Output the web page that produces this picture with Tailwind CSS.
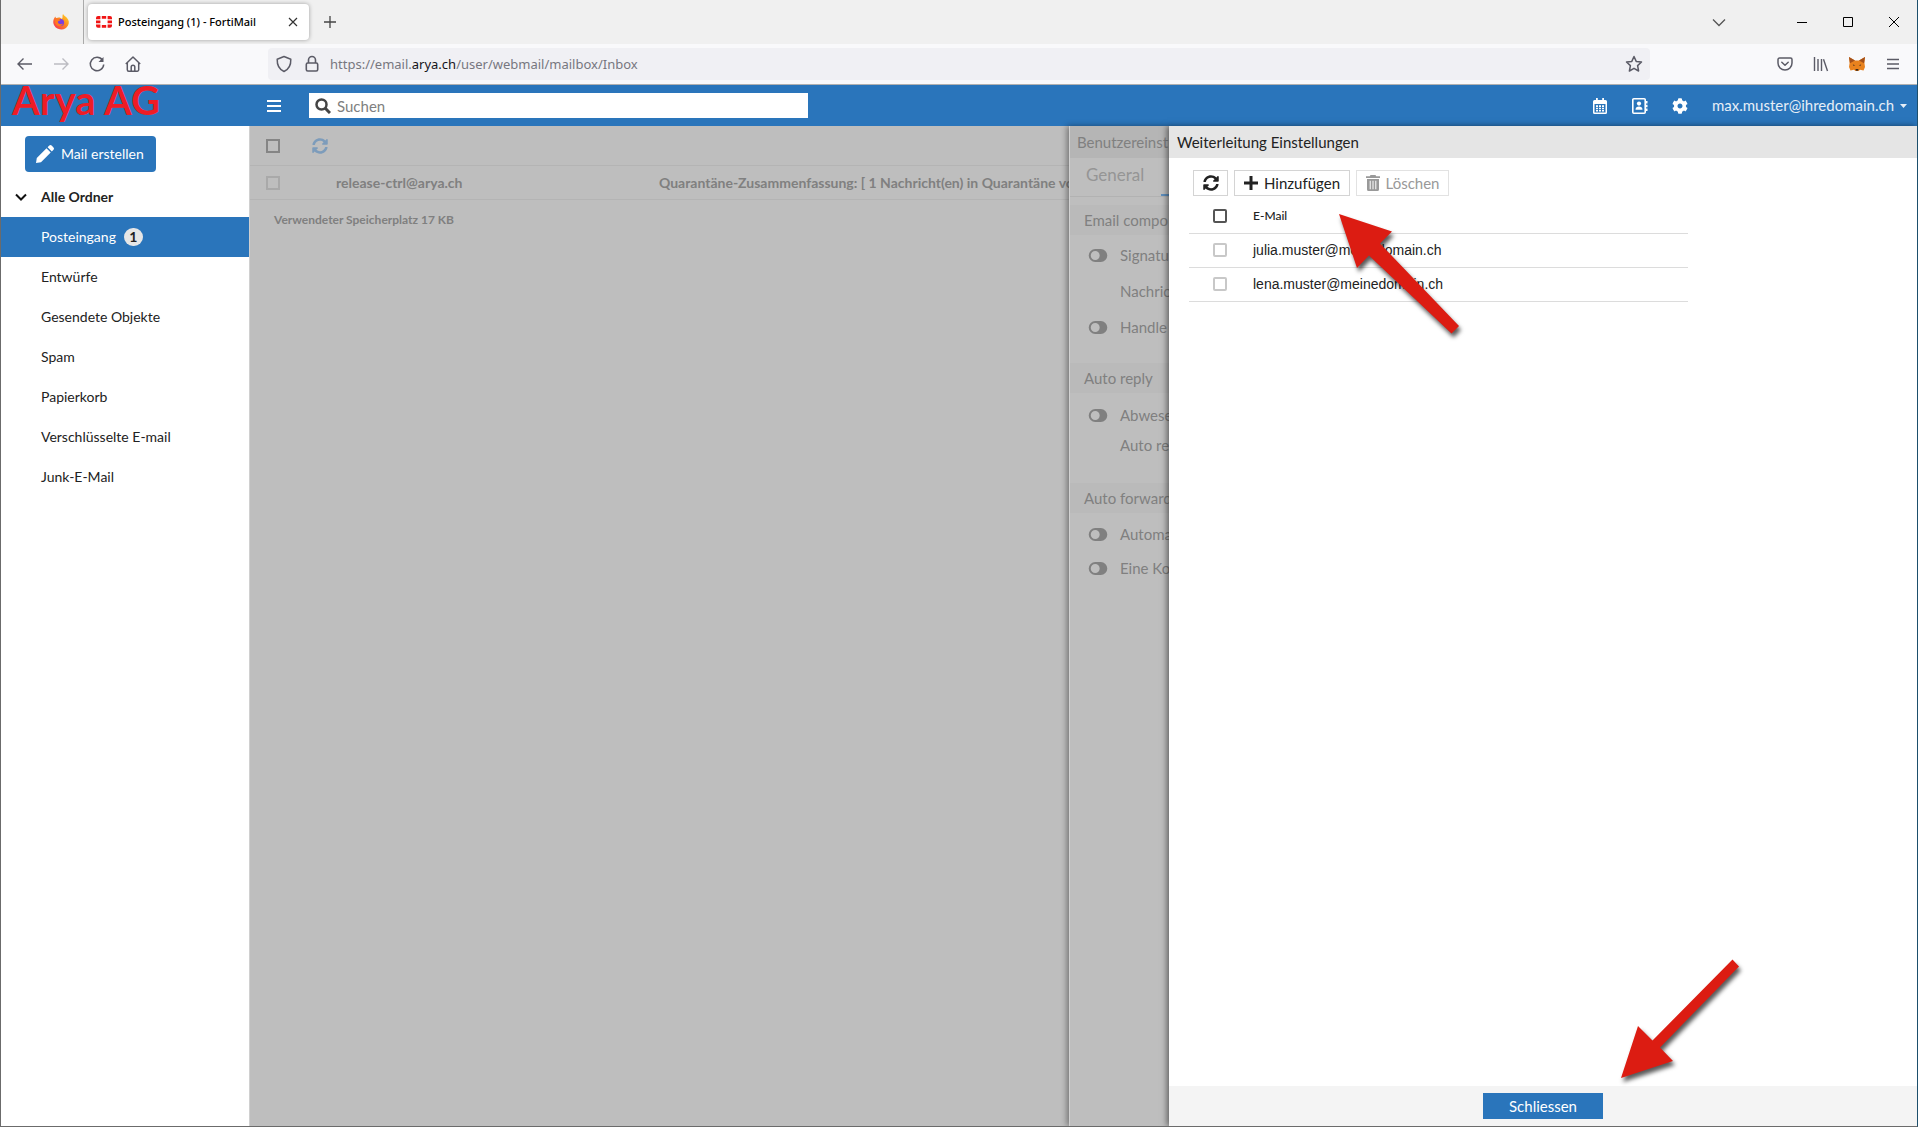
<!DOCTYPE html>
<html lang="de">
<head>
<meta charset="utf-8">
<title>Posteingang (1) - FortiMail</title>
<script src="https://cdn.jsdelivr.net/npm/@tailwindcss/browser@4"></script>
</head>
<body class="flex h-screen flex-col overflow-hidden border-r border-b border-l border-r-[#1d4f6c] border-b-[#6b6b6b] border-l-[#6b6b6b] bg-white font-[Lato,sans-serif] text-[#222]">

<!-- shared icon shapes -->
<svg class="hidden">
  <symbol id="sync" viewBox="0 0 512 512"><path fill="currentColor" d="M370.72 133.28C339.458 104.008 298.888 87.962 255.848 88c-77.458.068-144.328 53.178-162.791 126.85-1.344 5.363-6.122 9.15-11.651 9.15H24.103c-7.498 0-13.194-6.807-11.807-14.176C33.933 94.924 134.813 8 256 8c66.448 0 126.791 26.136 171.315 68.685L463.03 40.97C478.149 25.851 504 36.559 504 57.941V192c0 13.255-10.745 24-24 24H345.941c-21.382 0-32.09-25.851-16.971-40.971l41.75-41.749zM32 296h134.059c21.382 0 32.09 25.851 16.971 40.971l-41.75 41.75c31.262 29.273 71.835 45.319 114.876 45.28 77.418-.07 144.315-53.144 162.787-126.849 1.344-5.363 6.122-9.15 11.651-9.15h57.304c7.498 0 13.194 6.807 11.807 14.176C478.067 417.076 377.187 504 256 504c-66.448 0-126.791-26.136-171.315-68.685L48.97 471.03C33.851 486.149 8 475.441 8 454.059V320c0-13.255 10.745-24 24-24z"/></symbol>
  <symbol id="toggle" viewBox="0 0 20 14"><path fill="currentColor" fill-rule="evenodd" d="M7 0h6a7 7 0 0 1 0 14H7A7 7 0 0 1 7 0zm0 2.200a4.800 4.800 0 1 0 0 9.600a4.800 4.800 0 1 0 0-9.600z"/></symbol>
</svg>

<!-- tab strip -->
<div class="flex h-11 shrink-0 items-center bg-[#f0f0f0] pr-3 font-['Noto_Sans','Open_Sans',sans-serif]">
  <button aria-label="Firefox" class="flex h-11 w-[83px] items-center justify-end border-r border-[#aaa] pr-3">
    <svg class="size-5" viewBox="0 0 20 20"><defs><linearGradient id="ff" x1="1" y1="0" x2="0" y2="1"><stop offset="0" stop-color="#ffe226"/><stop offset=".45" stop-color="#ff8a1f"/><stop offset="1" stop-color="#f3265c"/></linearGradient></defs><path fill="url(#ff)" d="M12 2c1 2 3 2.500 4 4 2 2 2.500 5 1 7.500A8 8 0 0 1 2.300 11C2 8 3 6 4.500 4.500c0 1 .5 1.500 1 1.500C7.500 5 10 5.500 11 7c1-1.500 0-3.500 1-5z"/><circle cx="9.500" cy="10.500" r="3.600" fill="#7a3fe0"/><path fill="#ff7a1f" d="M4.500 7.500c2-1 4-.5 5 .8-1 .7-3 .5-2.500 2.200.5 2 3.500 2 5 1-1 2.500-4 3.500-6 2s-2.500-4-1.500-6z"/></svg>
  </button>
  <div class="ml-1 flex h-9 w-[221px] items-center rounded bg-white pr-2 pl-2 shadow-[0_0_4px_rgba(0,0,0,0.35)]">
    <svg class="h-4 w-4 shrink-0" viewBox="0 0 16 16"><path fill="#f01414" d="M5.800 2h4.400v2.800H5.800zM5.800 11h4.400v2.800H5.800zM0 6.600h4.400v2.600H0zM11.600 6.600H16v2.600h-4.400zM0 5.200V4a2 2 0 0 1 2-2h2.400v3.200zM16 5.200V4a2 2 0 0 0-2-2h-2.400v3.200zM0 10.600h4.400v3.200H2a2 2 0 0 1-2-2zM16 10.600h-4.400v3.200H14a2 2 0 0 0 2-2z"/></svg>
    <span class="ml-1.5 flex-1 text-[11px] font-medium whitespace-nowrap text-black">Posteingang (1) - FortiMail</span>
    <button aria-label="Tab schliessen" class="flex size-4 items-center justify-center"><svg class="size-2.5" viewBox="0 0 10 10" fill="none" stroke="#333" stroke-width="1.200"><path d="M1 1l8 8M9 1L1 9"/></svg></button>
  </div>
  <button aria-label="Neuer Tab" class="ml-[15px]"><svg class="size-3" viewBox="0 0 12 12" fill="none" stroke="#444" stroke-width="1.300"><path d="M6 0v12M0 6h12"/></svg></button>
  <div class="ml-auto flex items-center">
    <button aria-label="Alle Tabs" class="mr-[54px] flex w-[46px] justify-center"><svg class="size-3.5" viewBox="0 0 14 14" fill="none" stroke="#555" stroke-width="1.300"><path d="M1 4.500l6 6 6-6"/></svg></button>
    <button aria-label="Minimieren" class="flex w-[46px] justify-start"><svg class="size-3" viewBox="0 0 12 12" fill="none" stroke="#000"><path d="M1 6.500h10"/></svg></button>
    <button aria-label="Maximieren" class="flex w-[46px] justify-start"><svg class="size-3" viewBox="0 0 12 12" fill="none" stroke="#000"><path d="M1.500 1.500h9v9h-9z"/></svg></button>
    <button aria-label="Schliessen" class="mr-[5px] flex w-3 justify-start"><svg class="size-3" viewBox="0 0 12 12" fill="none" stroke="#000"><path d="M1 1l10 10M11 1L1 11"/></svg></button>
  </div>
</div>

<!-- address row -->
<div class="flex h-[41px] shrink-0 items-center gap-4 border-b border-[#b0b0b0] bg-[#f9f9fb] px-3.5 text-[#5b5b66]">
  <button aria-label="Zurück"><svg class="size-5" viewBox="0 0 20 20" fill="none" stroke="currentColor" stroke-width="1.400"><path d="M17 10H3M8.500 4.500L3 10l5.500 5.500"/></svg></button>
  <button aria-label="Vor" class="text-[#bcbcc2]"><svg class="size-5" viewBox="0 0 20 20" fill="none" stroke="currentColor" stroke-width="1.400"><path d="M3 10h14M11.500 4.500L17 10l-5.500 5.500"/></svg></button>
  <button aria-label="Neu laden"><svg class="size-5" viewBox="0 0 20 20" fill="none" stroke="currentColor" stroke-width="1.500"><path d="M15.500 6.200A6.700 6.700 0 1 0 16.700 10.500"/><path d="M16.500 3v5h-5z" fill="currentColor" stroke="none"/></svg></button>
  <button aria-label="Startseite"><svg class="size-5" viewBox="0 0 20 20" fill="none" stroke="currentColor" stroke-width="1.500" stroke-linejoin="round"><path d="M2.800 10L10 3l7.200 7"/><path d="M4.300 9v6.700a1.500 1.500 0 0 0 1.500 1.500h8.400a1.500 1.500 0 0 0 1.500-1.500V9"/><path d="M8.200 17v-4a1.800 1.800 0 0 1 3.600 0v4"/></svg></button>
  <div class="mx-[109px] flex h-8 flex-1 items-center rounded bg-[#f0f0f4] px-1.5">
    <svg class="size-5" viewBox="0 0 20 20" fill="none" stroke="currentColor" stroke-width="1.500" stroke-linejoin="round"><path d="M10 2.500l6.800 2.700c.2 5.500-1.800 10-6.800 12.300C5 15.200 3 10.700 3.200 5.200z"/></svg>
    <svg class="ml-2 size-5" viewBox="0 0 20 20" fill="none" stroke="currentColor" stroke-width="1.600"><rect x="4.300" y="9" width="11.400" height="8" rx="1.500"/><path d="M6.500 9V6a3.500 3.500 0 0 1 7 0v3"/></svg>
    <a href="#" class="ml-2 flex-1 pt-0.5 font-['Noto_Sans','Open_Sans',sans-serif] text-[13px] text-[#77777f]">https://email.<span class="text-[#15141a]">arya.ch</span>/user/webmail/mailbox/Inbox</a>
    <svg class="size-5" viewBox="0 0 20 20" fill="none" stroke="currentColor" stroke-width="1.500" stroke-linejoin="round"><path d="M10 2.500l2.200 4.900 5.300.6-3.900 3.600 1 5.400-4.600-2.700L5.400 17l1-5.400L2.500 8l5.300-.6z"/></svg>
  </div>
  <button aria-label="Pocket"><svg class="size-5" viewBox="0 0 20 20" fill="none" stroke="currentColor" stroke-width="1.500" stroke-linecap="round" stroke-linejoin="round"><path d="M4.500 4h11a1.500 1.500 0 0 1 1.500 1.500V9a7 7 0 0 1-14 0V5.500A1.500 1.500 0 0 1 4.500 4z"/><path d="M6.800 8.300L10 11.300l3.200-3"/></svg></button>
  <button aria-label="Bibliothek"><svg class="size-5" viewBox="0 0 20 20" fill="none" stroke="currentColor" stroke-width="1.400"><path d="M3.500 3v14M7 5v12M10.500 5v12M12.500 5.200L16.500 17"/></svg></button>
  <button aria-label="MetaMask"><svg class="size-5" viewBox="0 0 20 20"><path fill="#e8821e" d="M2 3l6 3.500h4L18 3l-.6 6 .6 4-1.500 3.500-3.500-.8L11.500 17h-3L7 15.700l-3.500.8L2 13l.6-4z"/><path fill="#a3501a" d="M2 3l6 3.500-5 2.800zM18 3l-6 3.500 5 2.800z"/><path fill="#3a2a20" d="M5.800 10.500l2.400.8-1.800.5zM14.200 10.500l-2.400.8 1.800.5zM8.500 15h3l-.4 1.800H8.900z"/></svg></button>
  <button aria-label="Menü"><svg class="size-5" viewBox="0 0 20 20" fill="none" stroke="currentColor" stroke-width="1.500"><path d="M4 5.500h12M4 10h12M4 14.500h12"/></svg></button>
</div>

<!-- application header -->
<header class="flex h-[41px] shrink-0 items-center bg-[#2a75bb] text-white">
  <div class="w-[265px] pb-3 pl-[11px] text-[40px] leading-8 font-bold text-[#ee1c25]">Arya AG</div>
  <button aria-label="Menü"><svg class="h-4 w-4" viewBox="0 0 16 16" fill="none" stroke="currentColor" stroke-width="2"><path d="M1 3h14M1 8h14M1 13h14"/></svg></button>
  <label class="ml-[27px] flex h-[25px] w-[499px] items-center bg-white px-1.5">
    <svg class="size-4 text-[#444]" viewBox="0 0 16 16" fill="none" stroke="currentColor" stroke-width="2.500"><circle cx="6.500" cy="6.500" r="5"/><path d="M10 10l5 5" stroke-width="3"/></svg>
    <input type="text" aria-label="Suchen" placeholder="Suchen" class="ml-1.5 flex-1 text-[15px] leading-5 text-[#444] outline-none placeholder:text-[#808080]">
  </label>
  <div class="ml-auto flex items-center pr-2.5">
    <button aria-label="Kalender" class="mr-6"><svg class="size-4" viewBox="0 0 16 16"><path fill="currentColor" fill-rule="evenodd" d="M4 0h1.800v2h4.400V0H12v2h1.500A1.500 1.500 0 0 1 15 3.500v11a1.500 1.500 0 0 1-1.500 1.500h-11A1.500 1.500 0 0 1 1 14.500v-11A1.500 1.500 0 0 1 2.500 2H4zM2.500 6v8.500h11V6z"/><path fill="currentColor" d="M4 7.300h2v1.700H4zM7 7.300h2v1.700H7zM10 7.300h2v1.700h-2zM4 9.700h2v1.500H4zM7 9.700h2v1.500H7zM10 9.700h2v1.500h-2zM4 12h2v1.500H4zM7 12h2v1.500H7zM10 12h2v1.500h-2z"/></svg></button>
    <button aria-label="Adressbuch" class="mr-6"><svg class="size-4" viewBox="0 0 16 16"><path fill="none" stroke="currentColor" stroke-width="1.600" d="M1.800.8h10.400a1 1 0 0 1 1 1v12.400a1 1 0 0 1-1 1H1.800a1 1 0 0 1-1-1V1.800a1 1 0 0 1 1-1z"/><circle cx="7" cy="5.600" r="2.100" fill="currentColor"/><path fill="currentColor" d="M3.500 11.800c0-2.300 1.500-3.300 3.500-3.300s3.500 1 3.500 3.300zM14 3h1.500v2.500H14zM14 6.800h1.500v2.500H14zM14 10.600h1.500v2.500H14z"/></svg></button>
    <button aria-label="Einstellungen" class="mr-6"><svg class="size-4" viewBox="0 0 512 512"><path fill="currentColor" d="M487.400 315.700l-42.600-24.600c4.300-23.200 4.300-47 0-70.200l42.600-24.600c4.900-2.800 7.100-8.600 5.500-14-11.100-35.600-30-67.800-54.700-94.600-3.800-4.100-10-5.100-14.800-2.300L380.800 110c-17.900-15.400-38.500-27.300-60.800-35.100V25.800c0-5.600-3.900-10.500-9.400-11.700-36.700-8.200-74.300-7.800-109.200 0-5.500 1.200-9.400 6.100-9.400 11.700V75c-22.200 7.900-42.800 19.800-60.800 35.100L88.700 85.500c-4.900-2.800-11-1.900-14.800 2.300-24.700 26.700-43.600 58.900-54.700 94.600-1.700 5.400.6 11.200 5.500 14L67.300 221c-4.300 23.200-4.300 47 0 70.200l-42.600 24.600c-4.900 2.800-7.100 8.600-5.500 14 11.100 35.600 30 67.800 54.700 94.600 3.800 4.100 10 5.100 14.800 2.300l42.600-24.600c17.900 15.400 38.500 27.300 60.800 35.100v49.200c0 5.600 3.900 10.500 9.400 11.700 36.700 8.200 74.300 7.800 109.200 0 5.500-1.200 9.400-6.100 9.400-11.700v-49.200c22.200-7.900 42.800-19.800 60.800-35.100l42.600 24.600c4.900 2.800 11 1.900 14.800-2.300 24.700-26.700 43.600-58.900 54.700-94.600 1.500-5.500-.7-11.300-5.600-14.100zM256 336c-44.100 0-80-35.900-80-80s35.900-80 80-80 80 35.900 80 80-35.900 80-80 80z"/></svg></button>
    <button class="flex items-center gap-1.5 text-[15px] text-[#e6eef7]">max.muster@ihredomain.ch<svg class="h-1 w-[7px]" viewBox="0 0 7 4"><path fill="currentColor" d="M0 0h7L3.500 4z"/></svg></button>
  </div>
</header>

<main class="flex min-h-0 flex-1">
  <!-- folders -->
  <nav class="w-[249px] shrink-0 border-r border-[#d0d0d0] pt-2.5 text-sm">
    <button class="mb-[5px] ml-6 flex h-9 w-[131px] items-center rounded bg-[#2a75bb] pl-2.5 whitespace-nowrap text-white"><svg class="mr-1.5 size-5" viewBox="0 0 20 20" fill="currentColor"><path d="M1 19l.8-5L11.500 4.300l4.200 4.200L6 18.200zM12.600 3.200l1.700-1.700a1.600 1.600 0 0 1 2.300 0l1.900 1.900a1.600 1.600 0 0 1 0 2.300l-1.700 1.700z"/></svg>Mail erstellen</button>
    <button class="flex h-10 w-full items-center font-bold"><svg class="mr-3.5 ml-3.5 size-3" viewBox="0 0 12 12" fill="none" stroke="#111" stroke-width="2"><path d="M1 3.500l5 5 5-5"/></svg>Alle Ordner</button>
    <a href="#" class="flex h-10 items-center bg-[#2a75bb] pl-10 text-white">Posteingang<span class="ml-2 flex h-[18px] w-[19px] items-center justify-center rounded-full bg-[#e6e6e6] font-bold text-[#222]">1</span></a>
    <a href="#" class="flex h-10 items-center pl-10">Entwürfe</a>
    <a href="#" class="flex h-10 items-center pl-10">Gesendete Objekte</a>
    <a href="#" class="flex h-10 items-center pl-10">Spam</a>
    <a href="#" class="flex h-10 items-center pl-10">Papierkorb</a>
    <a href="#" class="flex h-10 items-center pl-10">Verschlüsselte E-mail</a>
    <a href="#" class="flex h-10 items-center pl-10">Junk-E-Mail</a>
  </nav>

  <!-- message list -->
  <section class="min-w-0 flex-1 overflow-hidden bg-[#bebebe] text-sm font-bold text-[#808080]">
    <div class="flex h-10 items-center gap-8 border-b border-[#b4b4b4] pl-4">
      <input type="checkbox" aria-label="Alle auswählen" class="size-3.5 appearance-none border-2 border-[#858585]">
      <button aria-label="Aktualisieren" class="text-[#7d9cbb]"><svg class="size-4"><use href="#sync"/></svg></button>
    </div>
    <div class="flex h-[34px] items-center border-b border-[#b4b4b4] pl-4 whitespace-nowrap">
      <input type="checkbox" aria-label="Nachricht auswählen" class="mr-14 size-3.5 shrink-0 appearance-none border-2 border-[#a9a9a9]">
      <span class="w-[323px] shrink-0">release-ctrl@arya.ch</span>
      <span>Quarantäne-Zusammenfassung: [ 1 Nachricht(en) in Quarantäne vo</span>
    </div>
    <p class="py-3 pl-6 text-xs">Verwendeter Speicherplatz 17 KB</p>
  </section>

  <!-- user settings, dimmed behind the drawer -->
  <aside class="z-10 w-[100px] shrink-0 overflow-hidden border-l border-[#d2d2d2] bg-[#bebebe] text-[15px] whitespace-nowrap text-[#808080] shadow-[-2px_0_6px_rgba(0,0,0,0.4)]">
    <h2 class="flex h-8 items-center bg-[#b5b5b5] pl-[7px]">Benutzereinst</h2>
    <div class="flex h-[39px] items-stretch border-b border-[#b2b2b2] pl-4 text-[#959595]"><button class="w-[75px] shrink-0 pb-1 text-left text-[17px]">General</button><button class="w-20 shrink-0 border-b-2 border-[#5f8fbd]" aria-label="Mail"></button></div>
    <h3 class="mt-2 flex h-[30px] items-center bg-[#bababa] pl-3.5">Email compo</h3>
    <div class="flex h-10 items-center pl-[18px]"><button aria-label="Signatur" class="mr-3 shrink-0"><svg class="h-[13px] w-5"><use href="#toggle"/></svg></button>Signatu</div>
    <div class="flex h-8 items-center pl-[50px]">Nachric</div>
    <div class="flex h-10 items-center pl-[18px]"><button aria-label="Handle" class="mr-3 shrink-0"><svg class="h-[13px] w-5"><use href="#toggle"/></svg></button>Handle</div>
    <h3 class="mt-4 flex h-[30px] items-center bg-[#bababa] pl-3.5">Auto reply</h3>
    <div class="mt-1.5 flex h-8 items-center pl-[18px]"><button aria-label="Abwesenheit" class="mr-3 shrink-0"><svg class="h-[13px] w-5"><use href="#toggle"/></svg></button>Abwese</div>
    <div class="flex h-7 items-center pl-[50px]">Auto re</div>
    <h3 class="mt-6 flex h-[30px] items-center bg-[#bababa] pl-3.5">Auto forward</h3>
    <div class="mt-1 flex h-[34px] items-center pl-[18px]"><button aria-label="Automatisch" class="mr-3 shrink-0"><svg class="h-[13px] w-5"><use href="#toggle"/></svg></button>Automa</div>
    <div class="flex h-[34px] items-center pl-[18px]"><button aria-label="Eine Kopie" class="mr-3 shrink-0"><svg class="h-[13px] w-5"><use href="#toggle"/></svg></button>Eine Ko</div>
  </aside>

  <!-- forwarding drawer -->
  <section class="relative z-20 flex w-[748px] shrink-0 flex-col bg-white shadow-[-2px_0_6px_rgba(0,0,0,0.5)]">
    <h2 class="flex h-8 items-center bg-[#e5e5e5] pl-2 text-[15px]">Weiterleitung Einstellungen</h2>
    <div class="flex-1 px-5 pt-3">
      <div class="flex gap-1.5 pl-1 text-[15px]">
        <button aria-label="Aktualisieren" class="flex h-[26px] w-[35px] items-center justify-center border border-[#d4d4d4]"><svg class="size-4"><use href="#sync"/></svg></button>
        <button class="flex h-[26px] w-[116px] items-center justify-center gap-1.5 border border-[#d4d4d4] leading-6"><svg class="size-3.5" viewBox="0 0 14 14" stroke="currentColor" stroke-width="3"><path d="M7 0v14M0 7h14"/></svg>Hinzufügen</button>
        <button class="flex h-[26px] w-[93px] items-center justify-center gap-1.5 border border-[#e2e2e2] leading-6 text-[#999]"><svg class="h-4 w-3.5" viewBox="0 0 14 16"><path fill="currentColor" fill-rule="evenodd" d="M4.500 0h5l.7 1.200H14V3H0V1.200h3.800zM1 4h12v10.500a1.500 1.500 0 0 1-1.500 1.500h-9A1.500 1.500 0 0 1 1 14.500zm2.700 1.800v8.400h1V5.800zm2.800 0v8.400h1V5.800zm2.800 0v8.400h1V5.800z"/></svg>Löschen</button>
      </div>
      <table class="w-[499px] text-left font-['Liberation_Sans',sans-serif] text-sm">
        <thead><tr class="h-[37px] border-b border-[#dcdcdc]">
          <th class="w-16 pt-1 pl-6"><input type="checkbox" aria-label="Alle auswählen" class="block size-3.5 appearance-none rounded-xs border-2 border-[#555]"></th>
          <th class="pt-1 font-[Lato,sans-serif] text-xs font-medium">E-Mail</th></tr></thead>
        <tbody>
          <tr class="h-[34px] border-b border-[#dcdcdc]"><td class="pl-6"><input type="checkbox" aria-label="julia.muster@meinedomain.ch" class="block size-3.5 appearance-none rounded-xs border-2 border-[#c8c8c8]"></td><td>julia.muster@meinedomain.ch</td></tr>
          <tr class="h-[34px] border-b border-[#dcdcdc]"><td class="pl-6"><input type="checkbox" aria-label="lena.muster@meinedomain.ch" class="block size-3.5 appearance-none rounded-xs border-2 border-[#c8c8c8]"></td><td>lena.muster@meinedomain.ch</td></tr>
        </tbody>
      </table>
    </div>
    <footer class="flex h-10 items-center justify-center bg-[#f4f4f4]">
      <button class="h-[26px] w-[120px] bg-[#2a75bb] text-[15px] leading-6 text-white">Schliessen</button>
    </footer>
    <!-- callout arrows -->
    <svg class="pointer-events-none absolute top-20 left-40 h-36 w-36 overflow-visible drop-shadow-[2px_4px_2px_rgba(0,0,0,0.65)]" viewBox="0 0 144 144"><path fill="#dc1c12" d="M10 8L63 25.500 51 37.500 130 120l-7.500 7.500L40 49.500 28 62z"/></svg>
    <svg class="pointer-events-none absolute right-40 bottom-10 h-36 w-36 overflow-visible drop-shadow-[2px_4px_2px_rgba(0,0,0,0.65)]" viewBox="0 0 144 144"><path fill="#dc1c12" d="M8 136L25 84l14.500 14.500L119.500 17.500l6.500 7L47 105.500 60 119z"/></svg>
  </section>
</main>
</body>
</html>
